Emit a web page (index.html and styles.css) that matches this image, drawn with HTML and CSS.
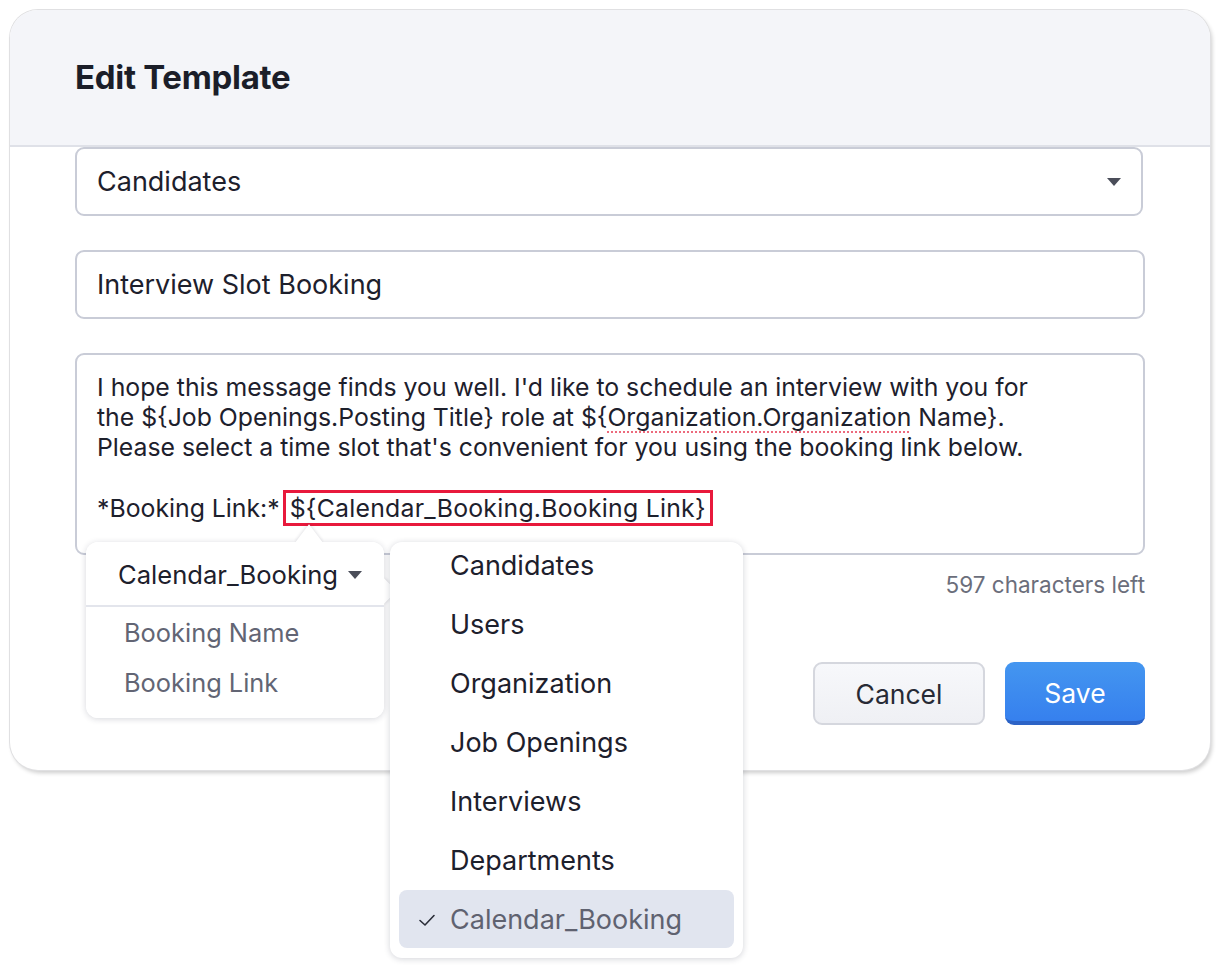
FILE: index.html
```html
<!DOCTYPE html>
<html>
<head>
<meta charset="utf-8">
<link rel="stylesheet" href="styles.css">
</head>
<body>
<div class="card">
  <div class="card-head">
    <h1 class="title">Edit Template</h1>
  </div>
  <div class="card-body">
    <div class="field select">
      <span>Candidates</span>
      <span class="caret"></span>
    </div>
    <div class="field input">Interview Slot Booking</div>
    <div class="textarea">
      I hope this message finds you well. I'd like to schedule an interview with you for<br>
      the ${Job Openings.Posting Title} role at ${<span class="spell">Organization.Organization</span> Name}.<br>
      Please select a time slot that's convenient for you using the booking link below.<br>
      <br>
      *Booking Link:*<span class="merge">${Calendar_Booking.Booking Link}</span>
    </div>
    <div class="counter">597 characters left</div>
    <div class="actions">
      <button class="btn btn-cancel">Cancel</button>
      <button class="btn btn-save">Save</button>
    </div>
  </div>

  <div class="pop-fields">
    <span class="arrow-up"></span>
    <span class="arrow-right"></span>
    <div class="pop-inner">
      <div class="pop-head">Calendar_Booking <span class="caret small"></span></div>
      <div class="pop-item">Booking Name</div>
      <div class="pop-item">Booking Link</div>
    </div>
  </div>

  <div class="pop-modules">
    <div class="mod-item">Candidates</div>
    <div class="mod-item">Users</div>
    <div class="mod-item">Organization</div>
    <div class="mod-item">Job Openings</div>
    <div class="mod-item">Interviews</div>
    <div class="mod-item">Departments</div>
    <div class="mod-item selected">
      <svg class="check" viewBox="0 0 20 20" width="20" height="20"><path d="M3 10.5 L8 15 L17 5.5" fill="none" stroke="#2a2d38" stroke-width="1.6" stroke-linecap="round" stroke-linejoin="round"/></svg>
      Calendar_Booking
    </div>
  </div>
</div>
</body>
</html>
```

FILE: styles.css
```css
* { box-sizing: border-box; }
html, body { margin: 0; padding: 0; background: #ffffff; }
body {
  font-family: "Inter", "Lato", "Liberation Sans", sans-serif;
  color: #1d202c;
  width: 1224px;
  height: 970px;
  overflow: hidden;
}
.card {
  position: relative;
  margin: 10px 0 0 10px;
  width: 1200px;
  height: 760px;
  background: #fff;
  border-radius: 28px;
  box-shadow: 0 0 0 1px #e0e0e2, 2px 3px 4px rgba(0,0,0,0.2);
}
.card-head {
  height: 137px;
  background: #f4f5f9;
  border-radius: 28px 28px 0 0;
  border-bottom: 2px solid #dfe1e8;
  padding: 0 0 0 65px;
  display: flex;
  align-items: center;
}
.title {
  margin: 0;
  font-size: 33px;
  font-weight: 700;
  color: #1b1e29;
  letter-spacing: -0.3px;
  padding-bottom: 2px;
}
.card-body {
  padding: 0 65px 0 65px;
  display: flex;
  flex-direction: column;
}
.field {
  height: 69px;
  border: 2px solid #c9ccd7;
  border-radius: 9px;
  display: flex;
  align-items: center;
  padding: 0 20px;
  font-size: 27px;
  color: #1d202c;
}
.select {
  margin-right: 2px;
  justify-content: space-between;
  padding-right: 20px;
}
.input { margin-top: 34px; }
.caret {
  width: 0; height: 0;
  border-left: 7px solid transparent;
  border-right: 7px solid transparent;
  border-top: 8px solid #4a4d59;
}
.caret.small {
  display: inline-block;
  margin-left: 10px;
  vertical-align: middle;
  border-left-width: 7px;
  border-right-width: 7px;
  border-top-width: 8px;
}
.textarea {
  margin-top: 34px;
  height: 202px;
  border: 2px solid #c9ccd7;
  border-radius: 9px;
  padding: 17px 20px 0 20px;
  font-size: 24.8px;
  line-height: 30.2px;
  color: #1d202c;
  white-space: nowrap;
}
.spell {
  text-decoration: underline dotted #ec6a7c;
  text-decoration-thickness: 2px;
  text-underline-offset: 5px;
}
.merge {
  border: 3px solid #e8193c;
  padding: 0 4px;
  margin-left: 3px;
  letter-spacing: 0.25px;
}
.counter {
  margin-top: 16px;
  text-align: right;
  font-size: 22.5px;
  color: #6b6e7b;
}
.actions {
  margin-top: 64px;
  display: flex;
  justify-content: flex-end;
  gap: 20px;
}
.btn {
  height: 63px;
  border-radius: 9px;
  font-family: inherit;
  font-size: 26.5px;
  padding: 0;
}
.btn-cancel {
  width: 172px;
  background: linear-gradient(#f7f8fb, #eff0f4);
  border: 2px solid #d5d7de;
  color: #272a35;
}
.btn-save {
  width: 140px;
  background: linear-gradient(#4496f0, #3680ee);
  border: none;
  border-bottom: 4px solid #2c63c6;
  color: #fff;
  padding-top: 3px;
}

/* field popover */
.pop-fields {
  position: absolute;
  left: 76px;
  top: 532px;
  width: 298px;
  height: 176px;
  background: #fff;
  border-radius: 12px;
  box-shadow: 0 1px 6px rgba(30,35,60,0.18);
}
.pop-inner {
  position: relative;
  background: #fff;
  border-radius: 12px;
  height: 100%;
  z-index: 2;
}
.arrow-up {
  position: absolute;
  left: 212px;
  top: -11px;
  width: 22px;
  height: 22px;
  background: #fff;
  transform: rotate(45deg) skew(8deg, 8deg);
  box-shadow: -1px -1px 3px rgba(30,35,60,0.12);
  z-index: 1;
}
.arrow-right {
  position: absolute;
  left: 289px;
  top: 40px;
  width: 18px;
  height: 18px;
  background: #fff;
  transform: rotate(45deg);
  box-shadow: 1px -1px 3px rgba(30,35,60,0.12);
  z-index: 1;
}
.pop-head {
  height: 65px;
  border-bottom: 2px solid #e3e5ec;
  padding: 2px 0 0 32px;
  display: flex;
  align-items: center;
  font-size: 25.6px;
  color: #1d202c;
}
.pop-item {
  padding-left: 38px;
  height: 50px;
  display: flex;
  align-items: center;
  font-size: 25.4px;
  color: #626574;
}

/* module dropdown */
.pop-modules {
  position: absolute;
  left: 380px;
  top: 532px;
  width: 353px;
  height: 416px;
  background: #fff;
  border-radius: 12px;
  box-shadow: 0 1px 6px rgba(30,35,60,0.2);
  padding: 3px 9px 0 9px;
  z-index: 3;
}
.mod-item {
  height: 59px;
  display: flex;
  align-items: center;
  padding-left: 51px;
  font-size: 27px;
  color: #1d202c;
  position: relative;
}
.mod-item:first-child { height: 60px; margin-top: -10px; }
.mod-item.selected {
  background: #e1e5ef;
  border-radius: 8px;
  color: #5f6270;
  margin-top: 0;
  height: 58px;
}
.check {
  position: absolute;
  left: 18px;
  top: 20px;
}
```
